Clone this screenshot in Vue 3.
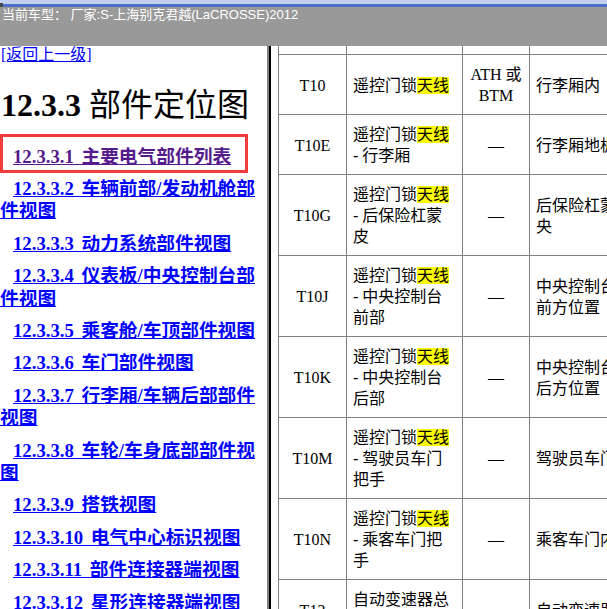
<template>
  <div class="page">
    <!-- 顶部窗口条 -->
    <div class="window-strip"><span class="handle"></span></div>
    <div class="car-bar">当前车型： 厂家:S-上海别克君越(LaCROSSE)2012</div>

    <div class="main">
      <!-- 左侧目录 -->
      <div class="side">
        <a class="back" href="#">[返回上一级]</a>
        <h1 class="title"><b>12.3.3</b> 部件定位图</h1>
        <p
          v-for="(item, index) in tocItems"
          :key="item.no"
          class="toc-item"
          :class="{ marked: index === 0 }"
        >
          <a href="#" :class="{ visited: index === 0 }">{{ item.no }} {{ item.name }}</a>
        </p>
      </div>

      <div class="divider"></div>

      <!-- 右侧表格 -->
      <div class="content">
        <table class="parts">
          <colgroup>
            <col class="col-code">
            <col class="col-name">
            <col class="col-opt">
            <col class="col-place">
          </colgroup>
          <tbody>
            <tr class="cut-row">
              <td></td>
              <td></td>
              <td></td>
              <td></td>
            </tr>
            <tr v-for="row in rows" :key="row.code">
              <td class="code">{{ row.code }}</td>
              <td>
                <template v-if="row.antenna">遥控门锁<span class="hl">天线</span></template>{{ row.name }}
              </td>
              <td class="opt">{{ row.opt }}</td>
              <td>{{ row.place }}</td>
            </tr>
          </tbody>
        </table>
      </div>
    </div>
  </div>
</template>

<script setup>
// 目录数据
const tocItems = [
  { no: '12.3.3.1', name: '主要电气部件列表' },
  { no: '12.3.3.2', name: '车辆前部/发动机舱部件视图' },
  { no: '12.3.3.3', name: '动力系统部件视图' },
  { no: '12.3.3.4', name: '仪表板/中央控制台部件视图' },
  { no: '12.3.3.5', name: '乘客舱/车顶部件视图' },
  { no: '12.3.3.6', name: '车门部件视图' },
  { no: '12.3.3.7', name: '行李厢/车辆后部部件视图' },
  { no: '12.3.3.8', name: '车轮/车身底部部件视图' },
  { no: '12.3.3.9', name: '搭铁视图' },
  { no: '12.3.3.10', name: '电气中心标识视图' },
  { no: '12.3.3.11', name: '部件连接器端视图' },
  { no: '12.3.3.12', name: '星形连接器端视图' },
];

// 表格数据
const rows = [
  { code: 'T10', antenna: true, name: '', opt: 'ATH 或 BTM', place: '行李厢内' },
  { code: 'T10E', antenna: true, name: ' - 行李厢', opt: '—', place: '行李厢地板' },
  { code: 'T10G', antenna: true, name: ' - 后保险杠蒙皮', opt: '—', place: '后保险杠蒙皮中央' },
  { code: 'T10J', antenna: true, name: ' - 中央控制台前部', opt: '—', place: '中央控制台后部前方位置' },
  { code: 'T10K', antenna: true, name: ' - 中央控制台后部', opt: '—', place: '中央控制台后部后方位置' },
  { code: 'T10M', antenna: true, name: ' - 驾驶员车门把手', opt: '—', place: '驾驶员车门内' },
  { code: 'T10N', antenna: true, name: ' - 乘客车门把手', opt: '—', place: '乘客车门内' },
  { code: 'T12', antenna: false, name: '自动变速器总成', opt: '—', place: '自动变速器' },
];
</script>

<style scoped>
.page {
  display: flex;
  flex-direction: column;
  width: 607px;
  height: 609px;
  overflow: hidden;
  background: #fff;
  font-family: "Liberation Serif", "Noto Sans CJK SC", serif;
  font-size: 16px;
  color: #000;
}

.window-strip {
  position: relative;
  flex: none;
  height: 4px;
  background: #c3cff0;
  border-bottom: 3px solid #4a70c9;
}

.handle {
  position: absolute;
  left: 0;
  top: 3px;
  width: 3px;
  height: 4px;
  background: #444;
}

.car-bar {
  flex: none;
  height: 39px;
  padding-left: 2px;
  background: #999;
  color: #fff;
  font-family: "Liberation Sans", "Noto Sans CJK SC", sans-serif;
  font-size: 13px;
  line-height: 15px;
}

.main {
  flex: 1;
  display: flex;
  min-height: 0;
}

.side {
  flex: none;
  width: 267px;
  overflow: hidden;
}

.back {
  display: block;
  padding-left: 1px;
  line-height: 18px;
}

a {
  color: #00f;
}

a.visited {
  color: #551a8b;
}

.title {
  margin: 16px 0 4px;
  padding-left: 1px;
  font-size: 32px;
  font-weight: normal;
  line-height: 50px;
  white-space: nowrap;
}

.toc-item {
  margin: 0 0 10px;
  text-indent: 13px;
  font-size: 18.72px;
  font-weight: bold;
  word-spacing: 3px;
  line-height: 22.4px;
}

.toc-item.marked {
  box-sizing: border-box;
  width: 248px;
  margin-bottom: 5px;
  padding: 9px 0 1.6px;
  border: 3px solid #f23b3b;
  text-indent: 10px;
}

.divider {
  flex: none;
  width: 2px;
  background: #808080;
  border-right: 2px solid #000;
}

.content {
  flex: 1;
  min-width: 0;
  overflow: hidden;
  padding-left: 7px;
}

.parts {
  width: 386px;
  table-layout: fixed;
  border-collapse: collapse;
}

.col-code {
  width: 68px;
}

.col-name {
  width: 116px;
}

.col-opt {
  width: 67px;
}

.col-place {
  width: 135px;
}

.parts td {
  padding: 9px 6px 8px;
  border: 1px solid #808080;
  line-height: 21px;
}

.cut-row td {
  height: 8px;
  padding: 0;
  border-top: none;
}

.code,
.opt {
  text-align: center;
}

.hl {
  display: inline-block;
  line-height: 17px;
  background: #ff0;
}
</style>

<style>
body {
  overflow: hidden;
}
</style>
